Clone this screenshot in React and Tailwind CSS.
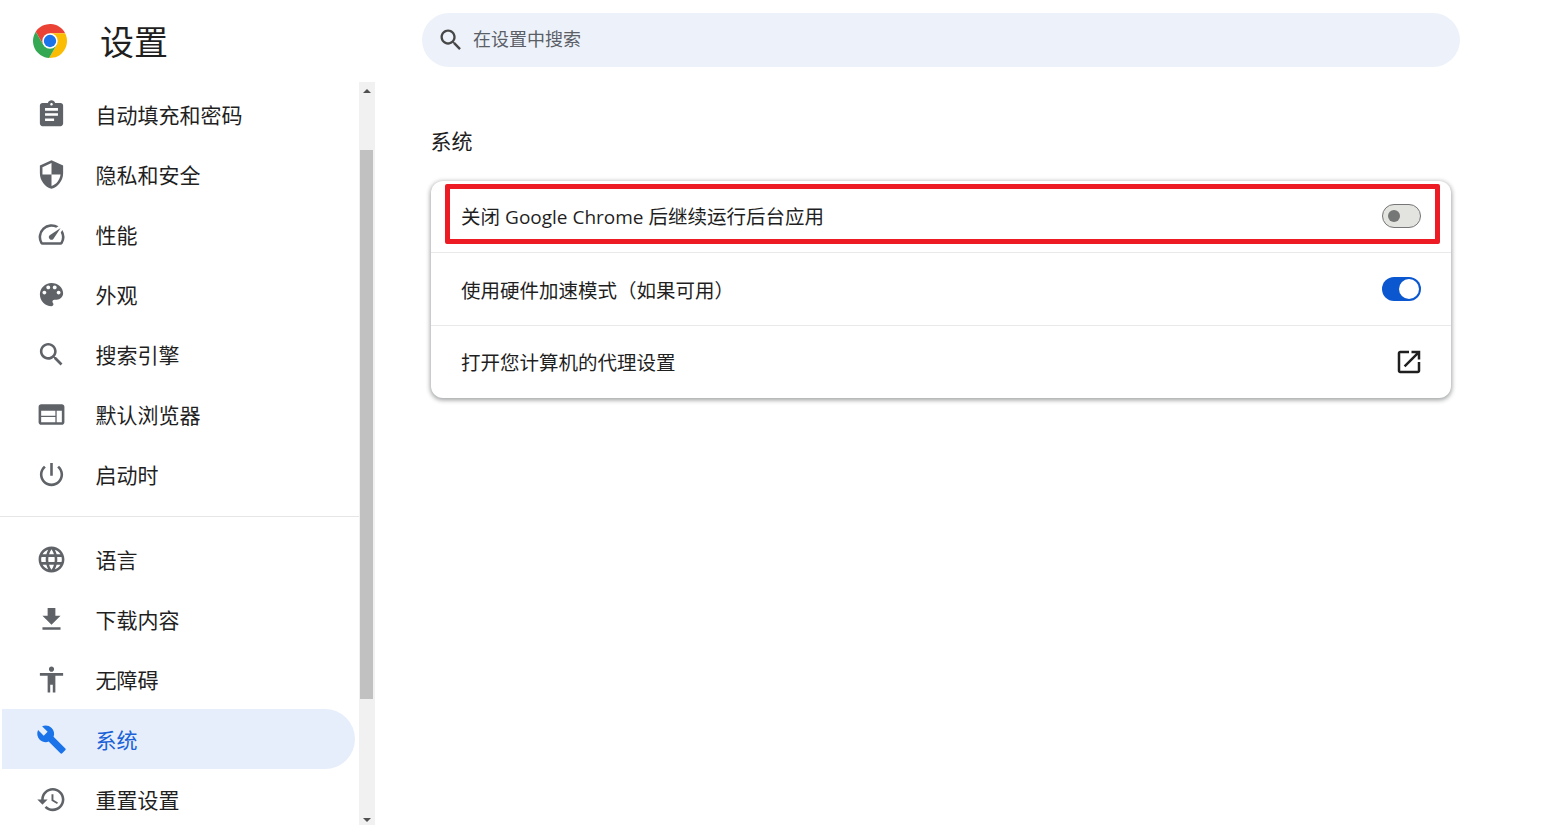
const icons = {
  assignment: "M19 3h-4.18C14.4 1.84 13.3 1 12 1c-1.3 0-2.4.84-2.82 2H5c-1.1 0-2 .9-2 2v14c0 1.1.9 2 2 2h14c1.1 0 2-.9 2-2V5c0-1.1-.9-2-2-2zm-7 0c.55 0 1 .45 1 1s-.45 1-1 1-1-.45-1-1 .45-1 1-1zm2 14H7v-2h7v2zm3-4H7v-2h10v2zm0-4H7V7h10v2z",
  shield: "M12 1L3 5v6c0 5.55 3.84 10.74 9 12 5.16-1.26 9-6.45 9-12V5l-9-4zm0 10.99h7c-.53 4.12-3.28 7.79-7 8.94V12H5V6.3l7-3.11v8.8z",
  speed: "M20.38 8.57l-1.23 1.85a8 8 0 0 1-.22 7.58H5.07A8 8 0 0 1 15.58 6.85l1.85-1.23A10 10 0 0 0 3.35 19a2 2 0 0 0 1.72 1h13.85a2 2 0 0 0 1.74-1 10 10 0 0 0-.27-10.44zm-9.79 6.84a2 2 0 0 0 2.83 0l5.66-8.49-8.49 5.66a2 2 0 0 0 0 2.83z",
  palette: "M12 3c-4.97 0-9 4.03-9 9s4.03 9 9 9c.83 0 1.5-.67 1.5-1.5 0-.39-.15-.74-.39-1.01-.23-.26-.38-.61-.38-.99 0-.83.67-1.5 1.5-1.5H16c2.76 0 5-2.24 5-5 0-4.42-4.03-8-9-8zm-5.5 9c-.83 0-1.5-.67-1.5-1.5S5.67 9 6.5 9 8 9.67 8 10.5 7.33 12 6.5 12zm3-4C8.67 8 8 7.33 8 6.5S8.67 5 9.5 5s1.5.67 1.5 1.5S10.33 8 9.5 8zm5 0c-.83 0-1.5-.67-1.5-1.5S13.67 5 14.5 5s1.5.67 1.5 1.5S15.33 8 14.5 8zm3 4c-.83 0-1.5-.67-1.5-1.5S16.67 9 17.5 9s1.5.67 1.5 1.5-.67 1.5-1.5 1.5z",
  search: "M15.5 14h-.79l-.28-.27C15.41 12.59 16 11.11 16 9.5 16 5.91 13.09 3 9.5 3S3 5.91 3 9.5 5.91 16 9.5 16c1.61 0 3.09-.59 4.23-1.57l.27.28v.79l5 4.99L20.49 19l-4.99-5zm-6 0C7.01 14 5 11.99 5 9.5S7.01 5 9.5 5 14 7.01 14 9.5 11.99 14 9.5 14z",
  web: "M20 4H4c-1.1 0-1.99.9-1.99 2L2 18c0 1.1.9 2 2 2h16c1.1 0 2-.9 2-2V6c0-1.1-.9-2-2-2zm-5 14H4v-4h11v4zm0-5H4V9h11v4zm5 5h-4V9h4v9z",
  power: "M13 3h-2v10h2V3zm4.83 2.17l-1.42 1.42C17.99 7.86 19 9.81 19 12c0 3.87-3.13 7-7 7s-7-3.13-7-7c0-2.19 1.01-4.14 2.58-5.42L6.17 5.17C4.23 6.82 3 9.26 3 12c0 4.97 4.03 9 9 9s9-4.03 9-9c0-2.74-1.23-5.18-3.17-6.83z",
  language: "M11.99 2C6.47 2 2 6.48 2 12s4.47 10 9.99 10C17.52 22 22 17.52 22 12S17.52 2 11.99 2zm6.93 6h-2.95c-.32-1.25-.78-2.45-1.38-3.56 1.84.63 3.37 1.91 4.33 3.56zM12 4.04c.83 1.2 1.48 2.53 1.91 3.96h-3.82c.43-1.43 1.08-2.76 1.91-3.96zM4.26 14C4.1 13.36 4 12.69 4 12s.1-1.36.26-2h3.38c-.08.66-.14 1.32-.14 2 0 .68.06 1.34.14 2H4.26zm.82 2h2.95c.32 1.25.78 2.45 1.38 3.56-1.84-.63-3.37-1.9-4.33-3.56zm2.95-8H5.08c.96-1.66 2.49-2.93 4.33-3.56C8.81 5.55 8.35 6.75 8.03 8zM12 19.96c-.83-1.2-1.48-2.53-1.91-3.96h3.82c-.43 1.43-1.08 2.76-1.91 3.96zM14.34 14H9.66c-.09-.66-.16-1.32-.16-2 0-.68.07-1.35.16-2h4.68c.09.65.16 1.32.16 2 0 .68-.07 1.34-.16 2zm.25 5.56c.6-1.11 1.06-2.31 1.38-3.56h2.95c-.96 1.65-2.49 2.93-4.33 3.56zM16.36 14c.08-.66.14-1.32.14-2 0-.68-.06-1.34-.14-2h3.38c.16.64.26 1.31.26 2s-.1 1.36-.26 2h-3.38z",
  download: "M19 9h-4V3H9v6H5l7 7 7-7zM5 18v2h14v-2H5z",
  accessibility: "M12 2c1.1 0 2 .9 2 2s-.9 2-2 2-2-.9-2-2 .9-2 2-2zm9 7h-6v13h-2v-6h-2v6H9V9H3V7h18v2z",
  build: "M22.7 19l-9.1-9.1c.9-2.3.4-5-1.5-6.9-2-2-5-2.4-7.4-1.3L9 6 6 9 1.6 4.7C.4 7.1.9 10.1 2.9 12.1c1.9 1.9 4.6 2.4 6.9 1.5l9.1 9.1c.4.4 1 .4 1.4 0l2.3-2.3c.5-.4.5-1.1.1-1.4z",
  restore: "M13 3c-4.97 0-9 4.03-9 9H1l3.89 3.89.07.14L9 12H6c0-3.87 3.13-7 7-7s7 3.13 7 7-3.13 7-7 7c-1.93 0-3.68-.79-4.94-2.06l-1.42 1.42C8.27 19.99 10.51 21 13 21c4.97 0 9-4.03 9-9s-4.03-9-9-9zm-1 5v5l4.28 2.54.72-1.21-3.5-2.08V8H12z",
  openNew: "M19 19H5V5h7V3H5c-1.11 0-2 .9-2 2v14c0 1.1.89 2 2 2h14c1.1 0 2-.9 2-2v-7h-2v7zM14 3v2h3.59l-9.83 9.83 1.41 1.41L19 6.41V10h2V3h-7z",
};

const topItems = [
  ["assignment", "自动填充和密码"],
  ["shield", "隐私和安全"],
  ["speed", "性能"],
  ["palette", "外观"],
  ["search", "搜索引擎"],
  ["web", "默认浏览器"],
  ["power", "启动时"],
];

const bottomItems = [
  ["language", "语言"],
  ["download", "下载内容"],
  ["accessibility", "无障碍"],
  ["build", "系统"],
  ["restore", "重置设置"],
];

function Icon({ name, className }) {
  return (
    <svg viewBox="0 0 24 24" className={className} fill="currentColor">
      <path d={icons[name]} />
    </svg>
  );
}

function ChromeLogo() {
  return (
    <svg viewBox="0 0 24 24" className="w-[34px] h-[34px]">
      <path fill="#ea4335" d="M12 12L7.28 14.72 1.935 5.47A12 12 0 0 1 22.69 6.55H12Z" />
      <path fill="#fbbc04" d="M12 12V6.55H22.69A12 12 0 0 1 11.375 23.98L16.72 14.72Z" />
      <path fill="#34a853" d="M12 12L16.72 14.72 11.375 23.98A12 12 0 0 1 1.935 5.47L7.28 14.72Z" />
      <circle cx="12" cy="12" r="5.45" fill="#fff" />
      <circle cx="12" cy="12" r="4.36" fill="#1a73e8" />
    </svg>
  );
}

function NavItem({ icon, label, active }) {
  return (
    <div
      className={`flex items-center h-[60px] w-[353px] ml-[2px] pl-[33.5px] rounded-r-[30px] shrink-0 ${
        active ? "bg-[#e6eefc] text-[#1a62d6]" : "text-[#1f1f1f]"
      }`}
    >
      <Icon
        name={icon}
        className={`w-[31px] h-[31px] shrink-0 ${active ? "text-[#1a73e8]" : "text-[#5f6368]"}`}
      />
      <span className="ml-[29px] pt-[4px] text-[21px]">{label}</span>
    </div>
  );
}

function Toggle({ on }) {
  if (on) {
    return (
      <div className="w-[39px] h-6 rounded-full bg-[#0b57d0] flex items-center justify-end pr-[2px]">
        <div className="w-5 h-5 rounded-full bg-white" />
      </div>
    );
  }
  return (
    <div className="w-[39px] h-6 mb-[1px] rounded-full bg-[#e3e3e0] border border-[#747775] flex items-center pl-[5px]">
      <div className="w-[12px] h-[12px] rounded-full bg-[#747775]" />
    </div>
  );
}

export default function App() {
  return (
    <div
      className="flex h-screen overflow-hidden bg-white text-[#1f1f1f]"
      style={{ fontFamily: '"Open Sans", "Noto Sans CJK SC", sans-serif' }}
    >
      {/* sidebar */}
      <div className="w-[375px] shrink-0 flex flex-col">
        <div className="h-[82px] shrink-0 flex items-center pl-[33px]">
          <ChromeLogo />
          <span className="ml-[33px] pt-[2px] text-[34px] text-[#1f1f1f]">设置</span>
        </div>
        <div className="flex flex-1 min-h-0">
          <div className="w-[359px] pt-[2px] overflow-hidden">
            {topItems.map(([icon, label]) => (
              <NavItem key={label} icon={icon} label={label} />
            ))}
            <div className="h-px bg-[#e6e6e6] mt-[12px] mb-[12px]" />
            {bottomItems.map(([icon, label]) => (
              <NavItem key={label} icon={icon} label={label} active={label === "系统"} />
            ))}
          </div>
          {/* scrollbar */}
          <div className="w-4 bg-[#f1f1f1] flex flex-col">
            <div className="h-[68px] pt-[7px] flex justify-center shrink-0">
              <div className="w-0 h-0 border-x-[4px] border-x-transparent border-b-[4px] border-b-[#505050]" />
            </div>
            <div className="ml-px w-[13px] h-[549px] bg-[#c1c1c1] shrink-0" />
            <div className="flex-1 flex items-end justify-center pb-[3px]">
              <div className="w-0 h-0 border-x-[4px] border-x-transparent border-t-[4px] border-t-[#505050]" />
            </div>
          </div>
        </div>
      </div>

      {/* main */}
      <div className="flex-1 pl-[47px] pt-[13px]">
        <div className="w-[1038px] h-[54px] rounded-[27px] bg-[#edf2fa] flex items-center pl-[15px]">
          <Icon name="search" className="w-[28px] h-[28px] text-[#474747]" />
          <span className="ml-[8px] pb-[2px] text-[18px] text-[#5b5e66]">在设置中搜索</span>
        </div>

        <div className="ml-[8.5px] mt-[59px] text-[21px] leading-[30px]">系统</div>

        <div className="relative ml-[9px] mt-[25px] w-[1020px] rounded-[12px] bg-white shadow-[0_1px_4px_1px_rgba(60,64,67,0.3),0_2px_5px_rgba(60,64,67,0.25)]">
          <div className="flex items-center justify-between h-[71px] pl-[30px] pr-[30px]">
            <span className="pt-[1px] text-[19.5px]">
              关闭 <span className="text-[19px]">Google Chrome</span> 后继续运行后台应用
            </span>
            <Toggle />
          </div>
          <div className="flex items-center justify-between h-[73px] pl-[30px] pr-[30px] border-t border-[#e9e9e9]">
            <span className="pt-[4px] text-[19.5px]">使用硬件加速模式（如果可用）</span>
            <Toggle on />
          </div>
          <div className="flex items-center justify-between h-[73px] pl-[30px] pr-[27px] border-t border-[#e9e9e9]">
            <span className="pt-[2px] text-[19.5px]">打开您计算机的代理设置</span>
            <Icon name="openNew" className="w-[30px] h-[30px] text-[#1f1f1f]" />
          </div>
          {/* red annotation box */}
          <div className="absolute left-[14px] top-[3px] w-[995px] h-[60px] border-[5px] border-[#ed1c24] rounded-[2px]" />
        </div>
      </div>
    </div>
  );
}
